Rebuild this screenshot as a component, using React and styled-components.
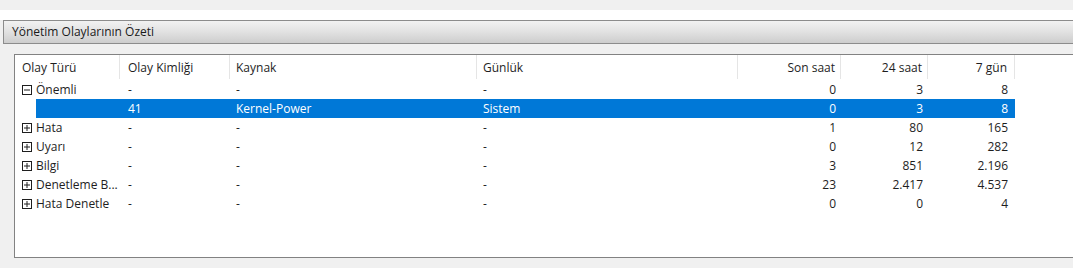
import { styled, createGlobalStyle } from 'styled-components';

const GlobalStyle = createGlobalStyle`
    html, body {
        margin: 0;
        padding: 0;
        background: #f0f0f0;
        overflow: hidden;
    }
    body {
        font-family: "Open Sans", "Noto Sans", sans-serif;
        font-size: 12px;
        color: #1a1a1a;
    }
`;

const columns = [
    { key: 'tur', title: 'Olay Türü', width: 105, pad: 7 },
    { key: 'id', title: 'Olay Kimliği', width: 110, pad: 8 },
    { key: 'kaynak', title: 'Kaynak', width: 247, pad: 6 },
    { key: 'gunluk', title: 'Günlük', width: 261, pad: 6 },
    { key: 'son', title: 'Son saat', width: 103, pad: 5, right: true },
    { key: 'gun1', title: '24 saat', width: 87, pad: 5, right: true },
    { key: 'gun7', title: '7 gün', width: 87, pad: 7, right: true },
];

const rows = [
    { tur: 'Önemli', open: true, id: '-', kaynak: '-', gunluk: '-', son: '0', gun1: '3', gun7: '8' },
    { child: true, id: '41', kaynak: 'Kernel-Power', gunluk: 'Sistem', son: '0', gun1: '3', gun7: '8' },
    { tur: 'Hata', id: '-', kaynak: '-', gunluk: '-', son: '1', gun1: '80', gun7: '165' },
    { tur: 'Uyarı', id: '-', kaynak: '-', gunluk: '-', son: '0', gun1: '12', gun7: '282' },
    { tur: 'Bilgi', id: '-', kaynak: '-', gunluk: '-', son: '3', gun1: '851', gun7: '2.196' },
    { tur: 'Denetleme B...', id: '-', kaynak: '-', gunluk: '-', son: '23', gun1: '2.417', gun7: '4.537' },
    { tur: 'Hata Denetle', id: '-', kaynak: '-', gunluk: '-', son: '0', gun1: '0', gun7: '4' },
];

const Expander = ({ open }) => (
    <svg width="10" height="10" viewBox="0 0 10 10">
        <rect x="0.5" y="0.5" width="9" height="9" fill="#fff" stroke="#1e1e1e" />
        <line x1="2" y1="5" x2="8" y2="5" stroke="#1e1e1e" />
        {!open && <line x1="5" y1="2" x2="5" y2="8" stroke="#1e1e1e" />}
    </svg>
);

const App = () => {
    return (
        <>
            <GlobalStyle />
            <Page>
                <TopStrip />
                <WhiteBand />
                <Section>
                    <SectionTitle>Yönetim Olaylarının Özeti</SectionTitle>
                    <SectionBody>
                        <ListPanel>
                            <HeaderRow>
                                {columns.map((c) => (
                                    <HeaderCell key={c.key} $w={c.width} $pad={c.pad} $right={c.right}>
                                        {c.title}
                                    </HeaderCell>
                                ))}
                            </HeaderRow>
                            {rows.map((r, i) => (
                                <Row key={i} $selected={r.child}>
                                    {columns.map((c) =>
                                        c.key === 'tur' ? (
                                            <TreeCell key={c.key} $w={c.width}>
                                                {!r.child && <Expander open={r.open} />}
                                                {!r.child && <span>{r.tur}</span>}
                                            </TreeCell>
                                        ) : (
                                            <Cell key={c.key} $w={c.width} $pad={c.pad} $right={c.right}>
                                                {r[c.key]}
                                            </Cell>
                                        )
                                    )}
                                </Row>
                            ))}
                        </ListPanel>
                    </SectionBody>
                </Section>
                <BottomBand />
                <BottomWhite />
            </Page>
        </>
    );
};

const Page = styled.div`
    width: 1073px;
    height: 275px;
    overflow: hidden;
    background: #f0f0f0;
`;

const TopStrip = styled.div`
    height: 10px;
    background: #f0f0f0;
`;

const WhiteBand = styled.div`
    height: 10px;
    background: #ffffff;
`;

const Section = styled.div`
    padding-left: 3px;
    background: #f0f0f0;
`;

const SectionTitle = styled.div`
    height: 22px;
    line-height: 22px;
    padding-left: 8px;
    border-top: 1px solid #8c8c8c;
    border-left: 1px solid #8c8c8c;
    border-bottom: 1px solid #8c8c8c;
    background: linear-gradient(to bottom, #f2f2f2 0%, #e3e3e3 45%, #cdcdcd 100%);
    color: #1a1a1a;
    white-space: nowrap;
`;

const SectionBody = styled.div`
    padding: 10px 0 0 11px;
`;

const ListPanel = styled.div`
    width: 1100px;
    height: 202px;
    background: #ffffff;
    border: 1px solid #828282;
    border-right: none;
`;

const HeaderRow = styled.div`
    display: flex;
    height: 24px;
    margin-bottom: 1px;
`;

const HeaderCell = styled.div`
    width: ${(p) => p.$w}px;
    box-sizing: border-box;
    display: flex;
    align-items: center;
    justify-content: ${(p) => (p.$right ? 'flex-end' : 'flex-start')};
    padding: ${(p) => (p.$right ? `0 ${p.$pad}px 0 0` : `0 0 0 ${p.$pad}px`)};
    border-right: 1px solid #e5e5e5;
    white-space: nowrap;
    color: #1e1e1e;
`;

const Row = styled.div`
    display: flex;
    height: 19px;
    line-height: 19px;
    color: ${(p) => (p.$selected ? '#ffffff' : '#1e1e1e')};
    background: ${(p) =>
        p.$selected ? 'linear-gradient(to right, transparent 21px, #0078d7 21px, #0078d7 1000px, transparent 1000px)' : 'transparent'};
    white-space: nowrap;
`;

const Cell = styled.div`
    width: ${(p) => p.$w}px;
    box-sizing: border-box;
    text-align: ${(p) => (p.$right ? 'right' : 'left')};
    padding: ${(p) => (p.$right ? `0 ${p.$pad}px 0 0` : `0 0 0 ${p.$pad}px`)};
    overflow: hidden;
`;

const TreeCell = styled.div`
    width: ${(p) => p.$w}px;
    box-sizing: border-box;
    display: flex;
    align-items: center;
    gap: 4px;
    padding-left: 7px;
    overflow: hidden;

    & svg {
        flex: none;
    }
`;

const BottomBand = styled.div`
    height: 10px;
    background: #f0f0f0;
`;

const BottomWhite = styled.div`
    height: 20px;
    background: #ffffff;
`;

export default App;
